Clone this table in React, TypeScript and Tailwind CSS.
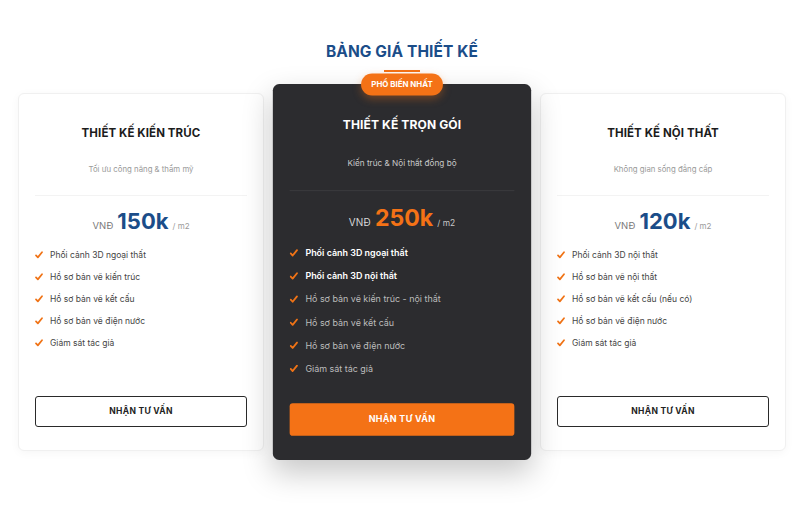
import { Fragment } from 'react'

type Plan = {
  title: string
  subtitle: string
  price: string
  features: { text: string; bold?: boolean }[]
  featured?: boolean
}

const plans: Plan[] = [
  {
    title: 'THIẾT KẾ KIẾN TRÚC',
    subtitle: 'Tối ưu công năng & thẩm mỹ',
    price: '150k',
    features: [
      { text: 'Phối cảnh 3D ngoại thất' },
      { text: 'Hồ sơ bản vẽ kiến trúc' },
      { text: 'Hồ sơ bản vẽ kết cấu' },
      { text: 'Hồ sơ bản vẽ điện nước' },
      { text: 'Giám sát tác giả' },
    ],
  },
  {
    title: 'THIẾT KẾ TRỌN GÓI',
    subtitle: 'Kiến trúc & Nội thất đồng bộ',
    price: '250k',
    featured: true,
    features: [
      { text: 'Phối cảnh 3D ngoại thất', bold: true },
      { text: 'Phối cảnh 3D nội thất', bold: true },
      { text: 'Hồ sơ bản vẽ kiến trúc - nội thất' },
      { text: 'Hồ sơ bản vẽ kết cấu' },
      { text: 'Hồ sơ bản vẽ điện nước' },
      { text: 'Giám sát tác giả' },
    ],
  },
  {
    title: 'THIẾT KẾ NỘI THẤT',
    subtitle: 'Không gian sống đẳng cấp',
    price: '120k',
    features: [
      { text: 'Phối cảnh 3D nội thất' },
      { text: 'Hồ sơ bản vẽ nội thất' },
      { text: 'Hồ sơ bản vẽ kết cấu (nếu có)' },
      { text: 'Hồ sơ bản vẽ điện nước' },
      { text: 'Giám sát tác giả' },
    ],
  },
]

function Check() {
  return (
    <svg viewBox="0 0 12 12" className="w-[8px] h-[8px] shrink-0">
      <path d="M1.5 6.5 L4.3 9.5 L10.5 1.8" fill="none" stroke="#f07316" strokeWidth="2.6" strokeLinecap="round" strokeLinejoin="round" />
    </svg>
  )
}

function PlanCard({ plan }: { plan: Plan }) {
  const dark = !!plan.featured
  return (
    <div
      className={
        'relative flex flex-col w-[246px] rounded-[6px] px-4 pt-[31px] pb-[23px] ' +
        (dark
          ? 'bg-[#2c2c2f] scale-[1.05] z-10 shadow-[0_12px_28px_rgba(0,0,0,0.22)]'
          : 'bg-white border border-[#f0f0f0] shadow-[0_2px_10px_rgba(0,0,0,0.04)]')
      }
    >
      {dark && (
        <div className="absolute left-1/2 -top-[10px] -translate-x-1/2 h-[21px] w-[78px] rounded-full bg-[#f47216] flex items-center justify-center text-white text-[7.5px] font-bold shadow-[0_3px_8px_rgba(244,114,22,0.35)]">
          PHỔ BIẾN NHẤT
        </div>
      )}
      <h3 className={'text-center text-[11.5px] leading-4 font-bold tracking-[0.1px] ' + (dark ? 'text-white' : 'text-[#1c1c1c]')}>
        {plan.title}
      </h3>
      <p className={'mt-[22px] text-center text-[7.8px] leading-3 ' + (dark ? 'text-[#c8c8c8]' : 'text-[#9a9a9a]')}>
        {plan.subtitle}
      </p>
      <div className={'mt-5 border-t ' + (dark ? 'border-[#3a3a3d]' : 'border-[#f3f3f3]')} />
      <div className="mt-[11px] h-7 flex items-baseline justify-center">
        <span className={'text-[9.5px] mr-1 ' + (dark ? 'text-[#d8d8d8]' : 'text-[#7a7a7a]')}>VNĐ</span>
        <span className={'text-[22px] leading-7 font-bold ' + (dark ? 'text-[#f47216]' : 'text-[#1b4d89]')}>{plan.price}</span>
        <span className={'text-[8px] ml-1 ' + (dark ? 'text-[#c8c8c8]' : 'text-[#9a9a9a]')}>/ m2</span>
      </div>
      <ul className="mt-[13px] mb-[26px] flex flex-col gap-2">
        {plan.features.map(f => (
          <li key={f.text} className="h-[14px] flex items-center gap-[7px]">
            <Check />
            <span
              className={
                'text-[8.5px] ' +
                (dark ? (f.bold ? 'text-white font-semibold' : 'text-[#bdbdbd]') : 'text-[#444]')
              }
            >
              {f.text}
            </span>
          </li>
        ))}
      </ul>
      <button
        className={
          'mt-auto h-[31px] w-full rounded-[3px] text-[8.5px] font-bold tracking-[0.3px] flex items-center justify-center ' +
          (dark ? 'bg-[#f47216] text-white' : 'border-[1.5px] border-[#2a2a2a] text-[#222] bg-white')
        }
      >
        NHẬN TƯ VẤN
      </button>
    </div>
  )
}

export default function App() {
  return (
    <div className="w-full h-[521px] bg-white pl-[18px] pr-[14px] pt-[40px]" style={{ fontFamily: 'Inter, "Noto Sans", sans-serif' }}>
      <h2 className="text-center text-[15.5px] leading-6 font-bold text-[#1b4d89] tracking-[0.1px]">BẢNG GIÁ THIẾT KẾ</h2>
      <div className="mx-auto mt-[6px] h-[2px] w-[36px] bg-[#f47216]" />
      <div className="mt-[21px] flex justify-between">
        {plans.map(p => (
          <Fragment key={p.title}>
            <PlanCard plan={p} />
          </Fragment>
        ))}
      </div>
    </div>
  )
}
